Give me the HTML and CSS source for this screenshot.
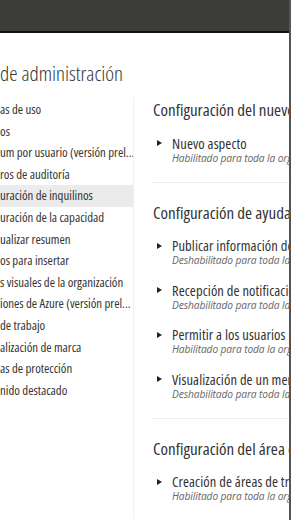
FILE: index.html
```html
<!DOCTYPE html>
<html>
  <head>
    <title>Portal de administración</title>
    <link rel="stylesheet" href="styles.css">
  </head>
  <body>
    <div class="frame">
      <div class="page">
        <div class="topbar"></div>
        <h1 class="page-title">de administración</h1>
        <div class="layout">
          <ul class="sidebar">
            <li>as de uso</li>
            <li>os</li>
            <li>um por usuario (versión prel...</li>
            <li>ros de auditoría</li>
            <li class="active">uración de inquilinos</li>
            <li>uración de la capacidad</li>
            <li>ualizar resumen</li>
            <li>os para insertar</li>
            <li>s visuales de la organización</li>
            <li>iones de Azure (versión prel...</li>
            <li>de trabajo</li>
            <li>alización de marca</li>
            <li>as de protección</li>
            <li>nido destacado</li>
          </ul>
          <div class="settings">
            <div class="section">
              <h2>Configuración del nuevo aspecto</h2>
              <div class="setting">
                <div class="name">Nuevo aspecto</div>
                <div class="state">Habilitado para toda la organización</div>
              </div>
            </div>
            <div class="section">
              <h2>Configuración de ayuda y soporte técnico</h2>
              <div class="setting">
                <div class="name">Publicar información de ayuda</div>
                <div class="state">Deshabilitado para toda la organización</div>
              </div>
              <div class="setting">
                <div class="name">Recepción de notificaciones</div>
                <div class="state">Deshabilitado para toda la organización</div>
              </div>
              <div class="setting">
                <div class="name">Permitir a los usuarios probar</div>
                <div class="state">Habilitado para toda la organización</div>
              </div>
              <div class="setting">
                <div class="name">Visualización de un mensaje</div>
                <div class="state">Deshabilitado para toda la organización</div>
              </div>
            </div>
            <div class="section">
              <h2>Configuración del área de trabajo</h2>
              <div class="setting">
                <div class="name">Creación de áreas de trabajo</div>
                <div class="state">Habilitado para toda la organización</div>
              </div>
            </div>
          </div>
        </div>
      </div>
      <div class="edge"></div>
    </div>
  </body>
</html>
```

FILE: styles.css
```css
body {
  margin: 0;
  color: #333;
  font-family: "Open Sans", "Noto Sans", sans-serif;
  background: #fff;
  overflow: hidden;
}
.frame {
  display: flex;
  height: 520px;
}
.page {
  width: 289px;
  overflow: hidden;
}
.topbar {
  height: 31px;
  background-color: #3c3c3a;
  border-bottom: 2px solid #111;
}
.edge {
  width: 2px;
  background-color: #555;
}
.page-title {
  margin: 26px 0 0;
  font-size: 21px;
  font-weight: 300;
  font-stretch: 87.5%;
  line-height: 28px;
  white-space: nowrap;
  color: #333;
}
.layout {
  display: flex;
  margin-top: 10px;
}
.sidebar {
  list-style: none;
  margin: 0;
  padding: 2px 0 0;
  width: 133px;
  flex-shrink: 0;
  border-right: 1px solid #f0f0f0;
  height: 420px;
}
.sidebar li {
  height: 21.6px;
  line-height: 21px;
  font-size: 12.8px;
  font-stretch: 87.5%;
  white-space: nowrap;
  overflow: hidden;
}
.sidebar li.active {
  background-color: #ebebeb;
}
.settings {
  padding-left: 19px;
  flex: 1;
  min-width: 0;
}
.section {
  border-bottom: 1px solid #ececec;
  padding-bottom: 18px;
}
.section h2 {
  margin: 0;
  padding: 3px 0 0;
  font-size: 17px;
  font-weight: 400;
  font-stretch: 87.5%;
  line-height: 20px;
  white-space: nowrap;
}
.section + .section h2 {
  padding-top: 20px;
}
.setting {
  position: relative;
  padding-left: 19px;
  margin-top: 14.5px;
  white-space: nowrap;
}
.setting + .setting {
  margin-top: 15.5px;
}
.setting::before {
  content: "";
  position: absolute;
  left: 4px;
  top: 5.5px;
  border-left: 5px solid #222;
  border-top: 3.5px solid transparent;
  border-bottom: 3.5px solid transparent;
}
.setting .name {
  font-size: 14.5px;
  font-stretch: 87.5%;
  letter-spacing: 0.1px;
  line-height: 17px;
}
.setting .state {
  font-size: 10.2px;
  letter-spacing: -0.1px;
  line-height: 12px;
  font-style: italic;
  color: #666;
}
```
